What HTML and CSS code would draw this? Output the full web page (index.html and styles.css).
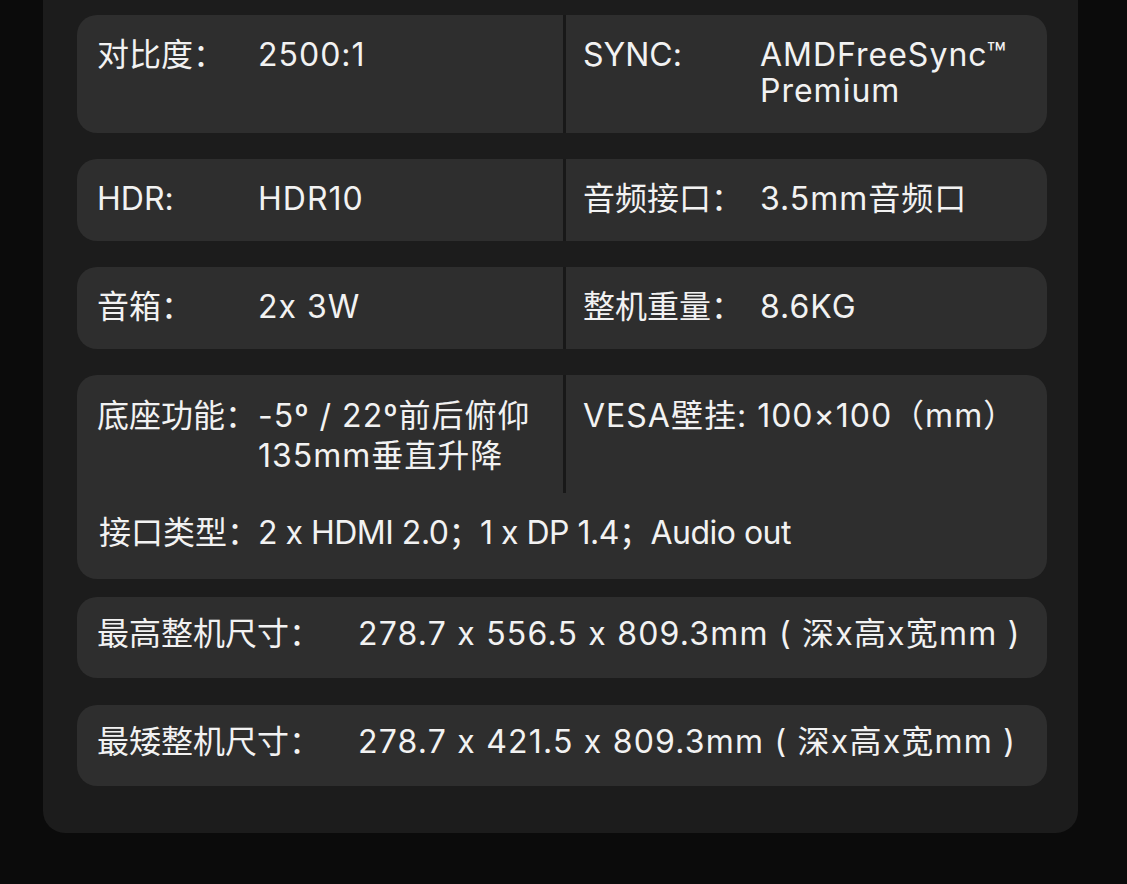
FILE: index.html
```html
<!DOCTYPE html>
<html lang="zh-CN">
<head>
  <meta charset="UTF-8">
  <meta name="viewport" content="width=device-width, initial-scale=1.0">
  <title>规格参数</title>
  <link rel="stylesheet" href="styles.css">
</head>
<body>
  <div class="panel">
    <div class="spec-card">
      <div class="cell">
        <span class="label">对比度：</span>
        <span class="value">2500:1</span>
      </div>
      <div class="cell right">
        <span class="label">SYNC:</span>
        <span class="value">AMDFreeSync™<br>Premium</span>
      </div>
    </div>

    <div class="spec-card">
      <div class="cell">
        <span class="label">HDR:</span>
        <span class="value">HDR10</span>
      </div>
      <div class="cell right">
        <span class="label">音频接口：</span>
        <span class="value">3.5mm音频口</span>
      </div>
    </div>

    <div class="spec-card">
      <div class="cell">
        <span class="label">音箱：</span>
        <span class="value">2x 3W</span>
      </div>
      <div class="cell right">
        <span class="label">整机重量：</span>
        <span class="value">8.6KG</span>
      </div>
    </div>

    <div class="spec-card tall">
      <div class="split">
        <div class="cell">
          <span class="label">底座功能：</span>
          <span class="value">-5º / 22º前后俯仰<br>135mm垂直升降</span>
        </div>
        <div class="cell right">
          <span class="inline">VESA壁挂: 100×100（mm）</span>
        </div>
      </div>
      <div class="full-row">
        <span class="label">接口类型：</span>
        <span class="value">2 x HDMI 2.0；1 x DP 1.4；Audio out</span>
      </div>
    </div>

    <div class="size-card">
      <span class="label">最高整机尺寸：</span>
      <span class="value">278.7 x 556.5 x 809.3mm ( 深x高x宽mm )</span>
    </div>

    <div class="size-card last">
      <span class="label">最矮整机尺寸：</span>
      <span class="value">278.7 x 421.5 x 809.3mm ( 深x高x宽mm )</span>
    </div>
  </div>
</body>
</html>
```

FILE: styles.css
```css
body {
  margin: 0;
  padding: 0;
  background: #0b0b0b;
  color: #f2f2f2;
  font-family: Inter, "Noto Sans CJK SC", sans-serif;
  font-size: 32px;
  font-feature-settings: "calt" 0;
  height: 884px;
  overflow: hidden;
}
.panel {
  width: 1035px;
  margin-left: 43px;
  padding: 15px 31px 47px 34px;
  box-sizing: border-box;
  background: #1c1c1c;
  border-radius: 0 0 22px 22px;
}
.label,
.value,
.inline {
  white-space: nowrap;
}
.spec-card {
  display: grid;
  grid-template-columns: 486px 1fr;
  background: #2e2e2e;
  border-radius: 20px;
  margin-bottom: 26px;
  line-height: 36px;
}
.cell {
  display: flex;
  padding: 22px 20px 24px 20px;
}
.cell .label {
  width: 161px;
  flex-shrink: 0;
}
.cell .value,
.cell .inline {
  letter-spacing: 1px;
}
.cell.right {
  border-left: 3px solid #181818;
  padding-left: 17px;
}
.cell.right .label {
  width: 177px;
}
.spec-card.tall {
  display: block;
  margin-bottom: 18px;
  line-height: 40px;
}
.split {
  display: grid;
  grid-template-columns: 486px 1fr;
}
.split .cell {
  padding: 21px 20px 17px 20px;
}
.split .cell.right {
  padding-left: 17px;
}
.full-row {
  display: flex;
  padding: 20px 20px 26px 22px;
}
.full-row .label {
  width: 159px;
  flex-shrink: 0;
}
.full-row .value {
  letter-spacing: -0.5px;
}
.size-card {
  display: flex;
  background: #2e2e2e;
  border-radius: 20px;
  padding: 19px 20px 26px 20px;
  line-height: 36px;
  margin-bottom: 27px;
}
.size-card.last {
  margin-bottom: 0;
}
.size-card .label {
  width: 261px;
  flex-shrink: 0;
}
.size-card .value {
  letter-spacing: 1.2px;
}
```
